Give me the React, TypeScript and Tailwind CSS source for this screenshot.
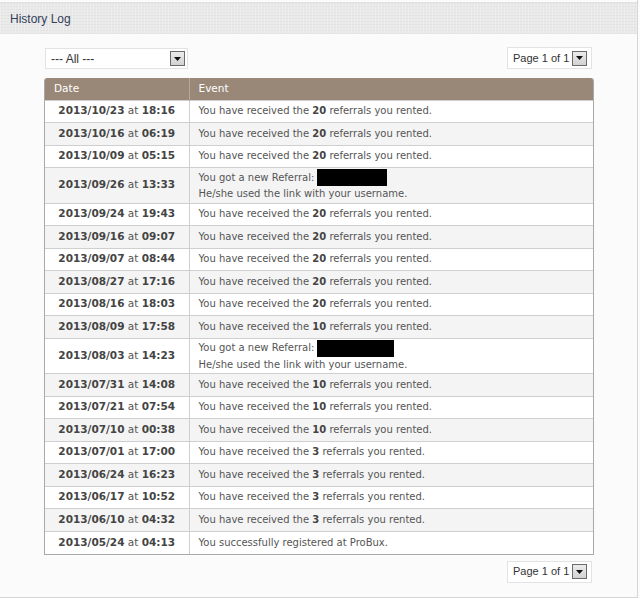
import React from "react";

type Row = { d: string; t: string; kind: "rent" | "ref" | "reg"; n?: string; box?: number };

const rows: Row[] = [
  { d: "2013/10/23", t: "18:16", kind: "rent", n: "20" },
  { d: "2013/10/16", t: "06:19", kind: "rent", n: "20" },
  { d: "2013/10/09", t: "05:15", kind: "rent", n: "20" },
  { d: "2013/09/26", t: "13:33", kind: "ref", box: 70 },
  { d: "2013/09/24", t: "19:43", kind: "rent", n: "20" },
  { d: "2013/09/16", t: "09:07", kind: "rent", n: "20" },
  { d: "2013/09/07", t: "08:44", kind: "rent", n: "20" },
  { d: "2013/08/27", t: "17:16", kind: "rent", n: "20" },
  { d: "2013/08/16", t: "18:03", kind: "rent", n: "20" },
  { d: "2013/08/09", t: "17:58", kind: "rent", n: "10" },
  { d: "2013/08/03", t: "14:23", kind: "ref", box: 77 },
  { d: "2013/07/31", t: "14:08", kind: "rent", n: "10" },
  { d: "2013/07/21", t: "07:54", kind: "rent", n: "10" },
  { d: "2013/07/10", t: "00:38", kind: "rent", n: "10" },
  { d: "2013/07/01", t: "17:00", kind: "rent", n: "3" },
  { d: "2013/06/24", t: "16:23", kind: "rent", n: "3" },
  { d: "2013/06/17", t: "10:52", kind: "rent", n: "3" },
  { d: "2013/06/10", t: "04:32", kind: "rent", n: "3" },
  { d: "2013/05/24", t: "04:13", kind: "reg" },
];

function Arrow() {
  return (
    <span className="flex h-[15px] w-[15px] shrink-0 items-center justify-center border border-[#6b6b6b] bg-[linear-gradient(#ececec,#d2d2d2)]">
      <svg width="7" height="4" viewBox="0 0 7 4">
        <path d="M0 0H7L3.5 4Z" fill="#111" />
      </svg>
    </span>
  );
}

function PageSelect() {
  return (
    <div className="flex h-[22px] w-[85px] items-center gap-[2px] whitespace-nowrap border border-[#e3e3e3] bg-white pl-[5px] pr-[4px] font-['Liberation_Sans',Arial,sans-serif] text-[11px] text-[#333]">
      <span className="flex-1 leading-none">Page 1 of 1</span>
      <Arrow />
    </div>
  );
}

export default function App() {
  return (
    <div className="h-[598px] w-[640px] bg-[#fbfbfb]">
      <div className="h-[598px] w-[638px] border-r border-b border-[#d6d6d6] pt-[2px]">
        <div className="flex h-[32px] items-center border-t border-[#e2e2e2] bg-[#e9e9e9] bg-[repeating-linear-gradient(90deg,rgba(255,255,255,0.25)_0px,rgba(255,255,255,0.25)_1px,transparent_1px,transparent_3px),repeating-linear-gradient(0deg,rgba(0,0,0,0.03)_0px,rgba(0,0,0,0.03)_1px,transparent_1px,transparent_3px)] pl-[10px] font-['Liberation_Sans',Arial,sans-serif] text-[12px] text-[#34405a]">
          History Log
        </div>
        <div className="flex items-start justify-between pl-[45px] pr-[45px] pt-[13px]">
          <div className="mt-[1px] flex h-[21px] w-[143px] items-center border border-[#e3e3e3] bg-white pl-[5px] pr-[2px] font-['Liberation_Sans',Arial,sans-serif] text-[12px] text-[#333]">
            <span className="flex-1 leading-none">--- All ---</span>
            <Arrow />
          </div>
          <PageSelect />
        </div>
        <div className="ml-[44px] mt-[9px] w-[550px] overflow-hidden rounded-t-[3px] border border-[#a9a9a9] border-t-0 font-['DejaVu_Sans',Verdana,sans-serif] text-[10.5px] text-[#555]">
          <table className="w-full border-collapse">
            <thead>
              <tr className="bg-[#998878] text-left text-white">
                <th className="h-[22px] w-[144px] border-r border-[#b4a89c] pl-[9px] font-normal">Date</th>
                <th className="h-[22px] pl-[9px] font-normal">Event</th>
              </tr>
            </thead>
            <tbody>
              {rows.map((r, i) => (
                <tr key={i} className={i % 2 === 1 ? "bg-[#f4f4f4]" : "bg-white"}>
                  <td className={`border-r border-t border-[#cfcfcf] text-center text-[#555] ${r.kind === "ref" ? "h-[35.5px]" : "h-[22.5px]"}`}>
                    <b className="text-[#444]">{r.d}</b> at <b className="text-[#444]">{r.t}</b>
                  </td>
                  <td className="border-t border-[#cfcfcf] pl-[9px] text-[10px] leading-[14px]">
                    {r.kind === "rent" && (
                      <>
                        You have received the <b className="text-[#444]">{r.n}</b> referrals you rented.
                      </>
                    )}
                    {r.kind === "reg" && <>You successfully registered at ProBux.</>}
                    {r.kind === "ref" && (
                      <div className="py-[1px]">
                        <div className="flex items-center">
                          You got a new Referral:
                          <span className="ml-[3px] inline-block h-[17px] bg-black" style={{ width: r.box }} />
                        </div>
                        <div className="mt-[1px]">He/she used the link with your username.</div>
                      </div>
                    )}
                  </td>
                </tr>
              ))}
            </tbody>
          </table>
        </div>
        <div className="flex justify-end pr-[45px] pt-[6px]">
          <PageSelect />
        </div>
      </div>
    </div>
  );
}
